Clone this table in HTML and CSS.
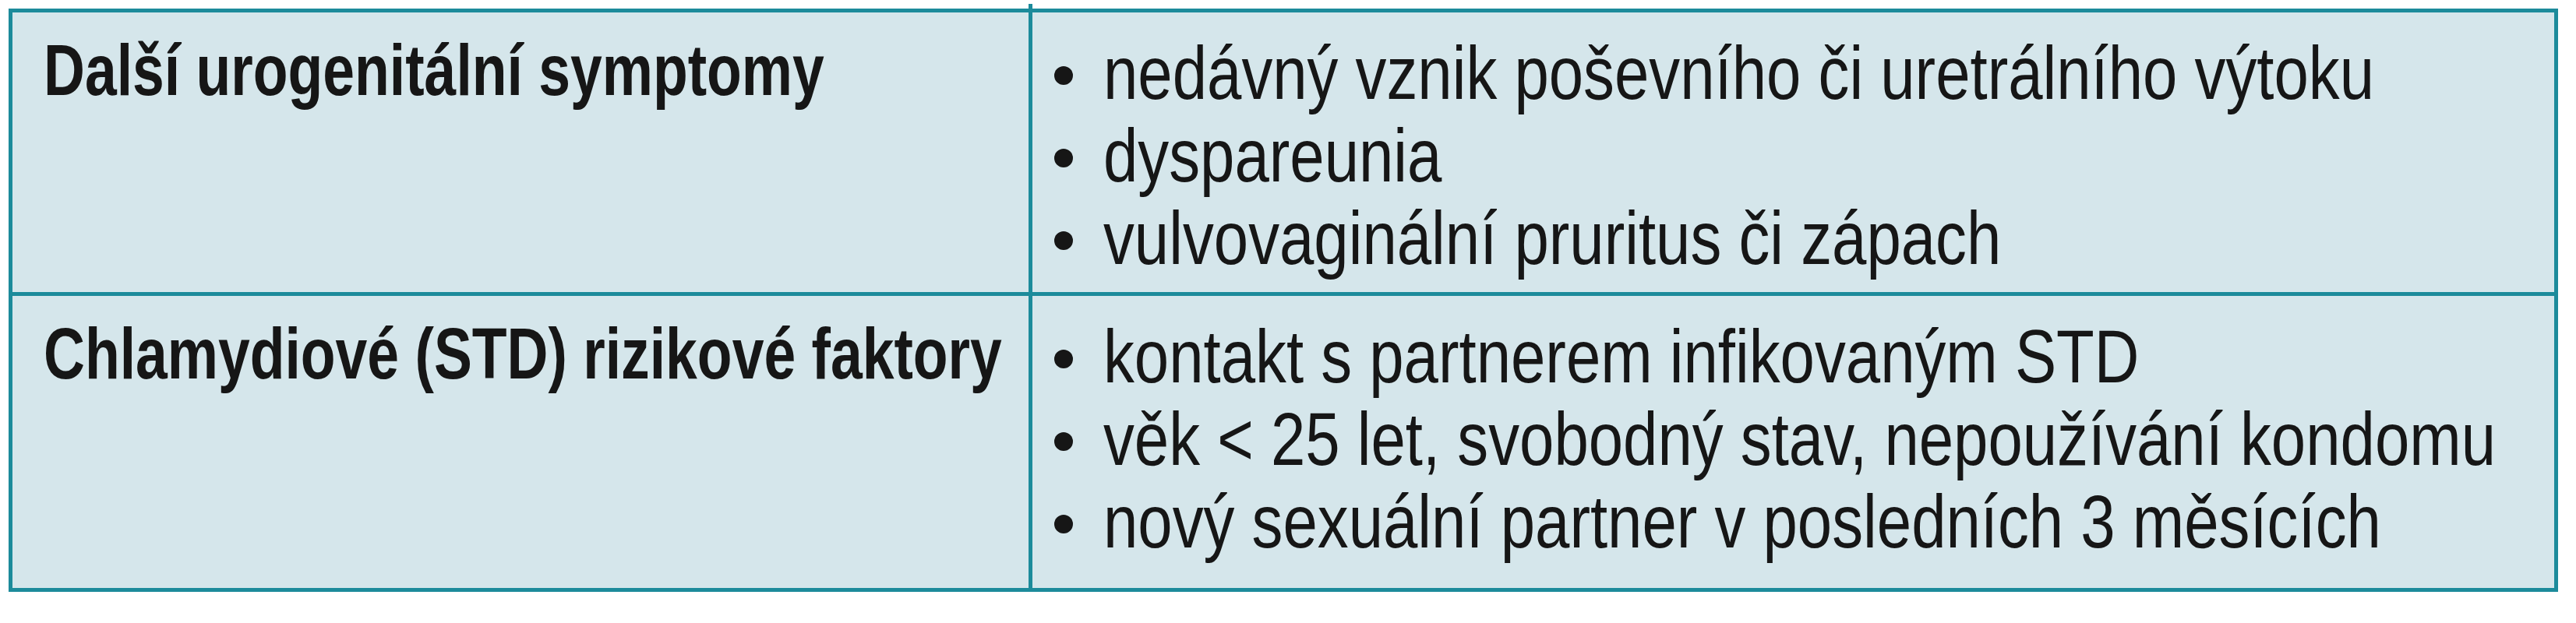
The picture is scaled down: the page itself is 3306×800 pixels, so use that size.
FILE: index.html
```html
<!DOCTYPE html>
<html lang="cs">
<head>
<meta charset="utf-8">
<title>Tabulka</title>
<link rel="stylesheet" href="styles.css">
</head>
<body>
<div class="sheet">
  <div class="grid">
    <div class="cell label"><span class="lt">Další urogenitální symptomy</span></div>
    <div class="cell items">
      <ul class="list">
        <li><span class="dot"></span><span class="it">nedávný vznik poševního či uretrálního výtoku</span></li>
        <li><span class="dot"></span><span class="it">dyspareunia</span></li>
        <li><span class="dot"></span><span class="it">vulvovaginální pruritus či zápach</span></li>
      </ul>
    </div>
    <div class="cell label second"><span class="lt">Chlamydiové (STD) rizikové faktory</span></div>
    <div class="cell items second">
      <ul class="list">
        <li><span class="dot"></span><span class="it">kontakt s partnerem infikovaným STD</span></li>
        <li><span class="dot"></span><span class="it">věk &lt; 25 let, svobodný stav, nepoužívání kondomu</span></li>
        <li><span class="dot"></span><span class="it">nový sexuální partner v posledních 3 měsících</span></li>
      </ul>
    </div>
  </div>
</div>
</body>
</html>
```

FILE: styles.css
```css
* { box-sizing: border-box; }
html, body {
  margin: 0;
  padding: 0;
  background: #ffffff;
}
body {
  width: 3306px;
  height: 800px;
  overflow: hidden;
  font-family: "Liberation Sans", Arial, sans-serif;
  color: #161616;
}
.sheet {
  padding: 11px 0 0 11px;
}
.grid {
  position: relative;
  width: 3272px;
  display: grid;
  grid-template-columns: 1304px 1fr;
  grid-template-rows: 359px 380px;
  border: 5px solid #1c8b9b;
  background: #d5e6eb;
}
.grid::before {
  content: "";
  position: absolute;
  left: 1304px;
  top: -11px;
  width: 5px;
  height: 6px;
  background: #1c8b9b;
}
.cell {
  min-width: 0;
  overflow: hidden;
}
.label {
  padding: 21px 0 0 40px;
  font-size: 93px;
  line-height: 106px;
  font-weight: bold;
  white-space: nowrap;
}
.lt {
  display: inline-block;
  transform: scaleX(0.788);
  transform-origin: left center;
}
.items {
  border-left: 5px solid #1c8b9b;
  padding: 25px 0 0 28px;
}
.second {
  border-top: 5px solid #1c8b9b;
}
.list {
  list-style: none;
  margin: 0;
  padding: 0;
  font-size: 97px;
  line-height: 106px;
  white-space: nowrap;
}
.list li {
  display: flex;
}
.it {
  display: inline-block;
  transform: scaleX(0.822);
  transform-origin: left center;
}
.dot {
  flex: none;
  width: 24px;
  height: 24px;
  margin-top: 44px;
  margin-right: 39px;
  border-radius: 50%;
  background: #161616;
}
```
